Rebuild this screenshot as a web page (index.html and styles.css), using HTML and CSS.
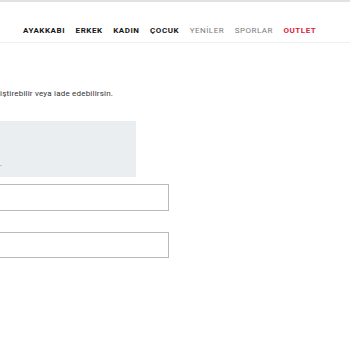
FILE: index.html
```html
<!DOCTYPE html>
<html lang="tr">
<head>
    <meta charset="UTF-8">
    <meta name="viewport" content="width=device-width, initial-scale=1.0">
    <title>İade</title>
    <link rel="stylesheet" href="styles.css">
</head>
<body>
    <header class="header">
        <nav class="nav">
            <a class="nav-item">AYAKKABI</a>
            <a class="nav-item">ERKEK</a>
            <a class="nav-item">KADIN</a>
            <a class="nav-item">ÇOCUK</a>
            <a class="nav-item light">YENİLER</a>
            <a class="nav-item light">SPORLAR</a>
            <a class="nav-item outlet">OUTLET</a>
        </nav>
    </header>

    <main class="content">
        <p class="intro">iştirebilir veya iade edebilirsin.</p>
        <div class="info-box">
            <span class="info-text">.</span>
        </div>
        <form class="form">
            <input type="text" class="field">
            <input type="text" class="field">
        </form>
    </main>
</body>
</html>
```

FILE: styles.css
```css
* {
    margin: 0;
    padding: 0;
    box-sizing: border-box;
}

body {
    background-color: #fff;
    font-family: Roboto, 'Liberation Sans', sans-serif;
    overflow: hidden;
}

.header {
    border-top: 2px solid #e2e2e2;
    border-bottom: 1px solid #efefef;
    height: 43px;
}

.nav {
    display: flex;
    gap: 10.5px;
    padding: 24px 0 0 23px;
}

.nav-item {
    font-size: 8px;
    font-weight: 700;
    letter-spacing: 0.55px;
    color: #161616;
    line-height: 10px;
}

.nav-item.light {
    font-weight: 400;
    letter-spacing: 0.5px;
    color: #7a7a7a;
}

.nav-item.outlet {
    color: #d6243c;
}

.content {
    padding-top: 45px;
}

.intro {
    font-size: 8px;
    letter-spacing: 0.2px;
    color: #333;
    line-height: 11px;
}

.info-box {
    width: 136px;
    height: 56px;
    margin-top: 22px;
    background-color: #ebeef1;
    padding-top: 30px;
}

.info-text {
    font-size: 7px;
    color: #555;
}

.form {
    display: flex;
    flex-direction: column;
    gap: 21px;
    margin-top: 7px;
}

.field {
    width: 179px;
    height: 26.5px;
    margin-left: -10px;
    border: 1px solid #b9b9b9;
    background: #fff;
}
```
